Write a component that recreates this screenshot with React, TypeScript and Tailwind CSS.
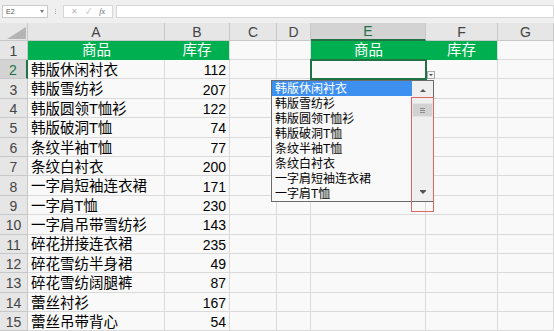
import React from "react";

const rows: [string, number][] = [
  ["韩版休闲衬衣", 112],
  ["韩版雪纺衫", 207],
  ["韩版圆领T恤衫", 122],
  ["韩版破洞T恤", 74],
  ["条纹半袖T恤", 77],
  ["条纹白衬衣", 200],
  ["一字肩短袖连衣裙", 171],
  ["一字肩T恤", 230],
  ["一字肩吊带雪纺衫", 143],
  ["碎花拼接连衣裙", 235],
  ["碎花雪纺半身裙", 49],
  ["碎花雪纺阔腿裤", 87],
  ["蕾丝衬衫", 167],
  ["蕾丝吊带背心", 54],
];

const letters = ["A", "B", "C", "D", "E", "F", "G"];

function TopBar() {
  return (
    <div className="h-[23px] bg-[#efefef] flex items-start pt-[5px] pl-[2px] gap-0">
      <div className="w-[46px] h-[13px] bg-white border border-[#c9c9c9] flex items-center justify-between px-[3px]">
        <span className="text-[7px] leading-none text-[#555]">E2</span>
        <span className="w-0 h-0 border-l-[2px] border-r-[2px] border-t-[3px] border-l-transparent border-r-transparent border-t-[#777]" />
      </div>
      <div className="w-[15px] h-[13px] flex flex-col items-center justify-center gap-[1px]">
        <span className="w-[1px] h-[1px] bg-[#aaa]" />
        <span className="w-[1px] h-[1px] bg-[#aaa]" />
        <span className="w-[1px] h-[1px] bg-[#aaa]" />
      </div>
      <div className="w-[50px] h-[13px] bg-white border border-[#d6d6d6] flex items-center justify-around px-[3px] text-[8px] leading-none text-[#b5b5b5]">
        <span>✕</span>
        <span>✓</span>
        <span className="italic text-[#666] font-['Liberation_Serif',serif]">fx</span>
      </div>
      <div className="ml-[3px] flex-1 h-[13px] bg-white border border-[#d6d6d6]" />
    </div>
  );
}

function HeaderRow() {
  return (
    <>
      <div className="h-[18px] bg-[#e6e6e6] border-r border-b border-[#c8c8c8] relative">
        <svg className="absolute left-[7px] top-[4px]" width="19" height="12" viewBox="0 0 19 12">
          <polygon points="19,0 19,12 0,12" fill="#b4b4b4" />
        </svg>
      </div>
      {letters.map((l) => (
        <div
          key={l}
          className={
            l === "E"
              ? "h-[18px] bg-[#d3d3d3] border-r border-[#c8c8c8] border-b-2 border-b-[#217346] flex items-center justify-center text-[14px] leading-none text-[#217346]"
              : "h-[18px] bg-[#e6e6e6] border-r border-b border-[#c8c8c8] flex items-center justify-center text-[14px] leading-none text-[#444]"
          }
        >
          {l}
        </div>
      ))}
    </>
  );
}

function RowHeader({ n }: { n: number }) {
  return (
    <div
      className={
        n === 2
          ? "bg-[#d3d3d3] border-r-2 border-r-[#217346] border-b border-b-[#c8c8c8] flex items-center justify-center pt-[2px] text-[14px] leading-none text-[#217346]"
          : "bg-[#e6e6e6] border-r border-b border-[#c8c8c8] flex items-center justify-center pt-[2px] text-[14px] leading-none text-[#444]"
      }
    >
      {n}
    </div>
  );
}

const cell = "border-r border-b border-[#dadada]";
const green = "bg-[#00b050] border-b border-b-[#00b050] flex items-center justify-center text-white text-[14.5px] leading-none pt-[1px]";

export default function App() {
  return (
    <div className="relative w-[554px] h-[331px] overflow-hidden bg-[#f9f9f9] font-['Liberation_Sans','Noto_Sans_CJK_SC',sans-serif]">
      <TopBar />
      <div className="grid grid-cols-[28px_137px_65px_47px_34px_115px_72px_56px] grid-rows-[18px_19px_repeat(14,19.4px)]">
        <HeaderRow />

        {/* row 1 */}
        <RowHeader n={1} />
        <div className={green}>商品</div>
        <div className={`${green} border-r border-r-[#dadada]`}>库存</div>
        <div className={cell} />
        <div className={cell} />
        <div className={green}>商品</div>
        <div className={`${green} border-r border-r-[#dadada]`}>库存</div>
        <div className={cell} />

        {rows.map(([name, qty], i) => (
          <React.Fragment key={name}>
            <RowHeader n={i + 2} />
            <div className={`${cell} flex items-center pl-[3px] pt-[2px] text-[14.5px] leading-none text-black whitespace-nowrap`}>{name}</div>
            <div className={`${cell} flex items-center justify-end pr-[3px] pt-[2px] text-[14px] leading-none text-black`}>{qty}</div>
            <div className={cell} />
            <div className={cell} />
            <div className={cell} />
            <div className={cell} />
            <div className={cell} />
          </React.Fragment>
        ))}
      </div>

      {/* active cell E2 */}
      <div className="absolute left-[310px] top-[59px] w-[117px] h-[21px] border-2 border-[#217346]" />
      <div className="absolute left-[427px] top-[71px] w-[8px] h-[8px] bg-[#f4f4f4] border border-[#a8a8a8] flex items-center justify-center">
        <span className="w-0 h-0 border-l-[2px] border-r-[2px] border-t-[2px] border-l-transparent border-r-transparent border-t-[#444]" />
      </div>

      {/* validation list */}
      <div className="absolute left-[271px] top-[80px] w-[163px] h-[122px] bg-[#f9f9f9] border border-[#6b6b6b] flex">
        <div className="flex-1 flex flex-col">
          {rows.slice(0, 8).map(([name], i) => (
            <div
              key={name}
              className={
                i === 0
                  ? "h-[15px] bg-[#3d8ff0] text-white text-[12px] leading-none flex items-center pl-[3px]"
                  : "h-[15px] text-black text-[12px] leading-none flex items-center pl-[3px]"
              }
            >
              {name}
            </div>
          ))}
        </div>
        <div className="w-[21px] bg-[#efefef] flex flex-col">
          <div className="h-[17px] flex items-center justify-center pt-[2px]">
            <span className="w-0 h-0 border-l-[3px] border-r-[3px] border-b-[3px] border-l-transparent border-r-transparent border-b-[#555]" />
          </div>
          <div className="flex-1 pt-[5px]">
            <div className="h-[14px] bg-[#d2d2d2] border border-[#e4e4e4] flex flex-col items-center justify-center gap-[1px]">
              <span className="w-[5px] h-[1px] bg-[#8a8a8a]" />
              <span className="w-[5px] h-[1px] bg-[#8a8a8a]" />
              <span className="w-[5px] h-[1px] bg-[#8a8a8a]" />
            </div>
          </div>
          <div className="h-[20px] flex flex-col items-center justify-start pt-[9px]">
            <span className="w-[6px] h-[1px] bg-[#555]" />
            <span className="w-0 h-0 border-l-[3px] border-r-[3px] border-t-[3px] border-l-transparent border-r-transparent border-t-[#555]" />
          </div>
        </div>
      </div>

      {/* highlight box */}
      <div className="absolute left-[411px] top-[97px] w-[23px] h-[115px] border border-[#e06666]" />
    </div>
  );
}
